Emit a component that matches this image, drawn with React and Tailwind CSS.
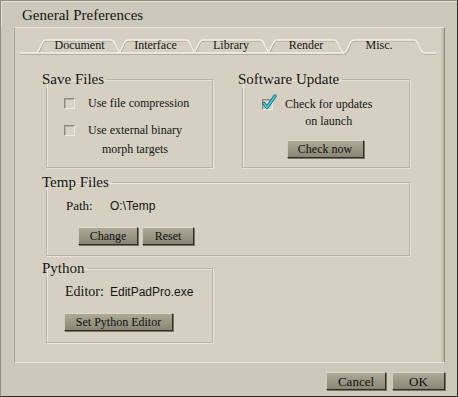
import React from 'react';

const serif = "font-['Liberation_Serif','Times_New_Roman',serif]";
const sans = "font-['Liberation_Sans',Arial,sans-serif]";

const Btn = ({ children, className = '' }) => (
  <button
    className={`h-[18px] ${className} ${serif} text-[12px] leading-none text-[#111] bg-linear-to-b from-[#aeaa99] via-[#9b9785] to-[#8a8675] border border-t-[#dcd8cb] border-l-[#cfcbbd] border-r-[#2f2e29] border-b-[#2f2e29] shadow-[1px_1px_0_#77736a] flex items-center justify-center`}
  >
    {children}
  </button>
);

const Check = ({ checked }) => (
  <span className="relative block w-[11px] h-[11px] shrink-0 border border-t-[#8e8a7c] border-l-[#8e8a7c] border-r-[#eeeadf] border-b-[#eeeadf] bg-[#d8d4c6] shadow-[inset_1px_1px_0_#b6b1a2]">
    {checked && (
      <svg className="absolute -left-[1px] -top-[6px]" width="15" height="16" viewBox="0 0 15 16">
        <path d="M2 9.5 L5 13.5 L13 2" fill="none" stroke="#1b5f6c" strokeWidth="3.2" strokeLinecap="round" strokeLinejoin="round" />
        <path d="M2 9.5 L5 13.5 L13 2" fill="none" stroke="#2fd3ea" strokeWidth="1.8" strokeLinecap="round" strokeLinejoin="round" />
      </svg>
    )}
  </span>
);

const Group = ({ title, className = '', children }) => (
  <fieldset className={`${className} border border-[#b9b4a5] shadow-[inset_1px_1px_0_#e9e5d9,1px_1px_0_#e9e5d9]`}>
    <legend className={`-ml-[5px] pr-[3px] ${serif} text-[15px] leading-[18px] text-[#151515]`}>{title}</legend>
    {children}
  </fieldset>
);

const tabs = [
  { label: 'Document', w: 'w-[89px]' },
  { label: 'Interface', w: 'w-[63px]' },
  { label: 'Library', w: 'w-[88px]' },
  { label: 'Render', w: 'w-[62px]' },
  { label: 'Misc.', w: 'w-[84px]' },
];

const spans = [[20, 107], [102, 182], [177, 256], [251, 330], [328, 410]];
const tabPath = ([a, b]) =>
  `M${a} 25 C${a + 6} 25 ${a + 5} 12 ${a + 11} 12 L${b - 11} 12 C${b - 5} 12 ${b - 6} 25 ${b} 25`;

const TabStrip = () => (
  <div className="relative h-[27px]">
    <svg className="absolute inset-0" width="429" height="27" viewBox="0 0 429 27">
      {spans.map((s, i) => (
        <g key={i}>
          <path d={tabPath(s)} transform="translate(0.8 1)" fill="none" stroke="#a39e8f" strokeWidth="1" />
          <path d={tabPath(s)} fill="none" stroke="#f3f0e7" strokeWidth="1.4" />
        </g>
      ))}
      <path d="M5 26.3 L328 26.3 M410 26.3 L421 26.3" stroke="#aaa596" strokeWidth="1" />
      <path d="M5 25 L328 25 M410 25 L421 25" stroke="#f3f0e7" strokeWidth="1.4" />
    </svg>
    <div className={`relative flex pl-[20px] pt-[10px] ${serif} text-[12px] leading-[14px] text-[#151515]`}>
      {tabs.map((t) => (
        <div key={t.label} className={`${t.w} text-center`}>{t.label}</div>
      ))}
    </div>
  </div>
);

export default function App() {
  return (
    <div className={`w-[458px] h-[397px] flex flex-col bg-[#cdc9ba] border border-t-[#8f8b80] border-l-[#8f8b80] border-r-[#2b2a26] border-b-[#2b2a26] ${serif} text-[#151515]`}>
      <div className="h-[26px] pl-[21px] pt-[5px] text-[15px] leading-[18px] shadow-[inset_1px_1px_0_#e4e0d4]">
        General Preferences
      </div>

      <div className="ml-[13px] w-[431px] h-[336px] bg-[#d5d0c1] border border-t-[#eeeadf] border-l-[#a5a193] border-r-[#8d897c] border-b-[#ebe7dc] shadow-[inset_-3px_0_2px_-1px_#bdb8a9]">
        <TabStrip />

        <div className="pl-[31px] grid grid-cols-[167px_168px] gap-x-[29px]">
          <Group title="Save Files" className="mt-[15px] h-[98px]">
            <div className="pl-[17px] pt-[6px] text-[12px]">
              <div className="flex items-center gap-[13px] leading-[19px]">
                <Check />
                <span>Use file compression</span>
              </div>
              <div className="mt-[8px] flex items-start gap-[13px] leading-[19px]">
                <span className="mt-[4px]"><Check /></span>
                <span className="text-center">Use external binary<br />morph targets</span>
              </div>
            </div>
          </Group>

          <Group title="Software Update" className="mt-[15px] h-[98px]">
            <div className="pl-[19px] pt-[8px] text-[12px]">
              <div className="flex items-start gap-[12px] leading-[17px]">
                <span className="mt-[3px]"><Check checked /></span>
                <span className="text-center">Check for updates<br />on launch</span>
              </div>
            </div>
            <div className="mt-[10px] flex justify-center pr-[2px]">
              <Btn className="w-[77px]">Check now</Btn>
            </div>
          </Group>

          <Group title="Temp Files" className="col-span-2 mt-[5px] h-[83px]">
            <div className="pl-[19px] pt-[6px] flex items-center leading-[18px]">
              <span className="w-[44px] text-[13px]">Path:</span>
              <span className={`${sans} text-[12px]`}>O:\Temp</span>
            </div>
            <div className="mt-[12px] pl-[31px] flex gap-[4px]">
              <Btn className="w-[60px]">Change</Btn>
              <Btn className="w-[52px]">Reset</Btn>
            </div>
          </Group>

          <Group title="Python" className="mt-[3px] h-[84px]">
            <div className="pl-[18px] pt-[6px] flex items-center leading-[18px]">
              <span className="w-[45px] text-[14px]">Editor:</span>
              <span className={`${sans} text-[12px]`}>EditPadPro.exe</span>
            </div>
            <div className="mt-[12px] pl-[17px]">
              <Btn className="w-[109px]">Set Python Editor</Btn>
            </div>
          </Group>
        </div>
      </div>

      <div className="flex justify-end gap-[6px] pt-[9px] pr-[12px]">
        <Btn className="w-[60px] text-[13px]">Cancel</Btn>
        <Btn className="w-[53px] text-[13px]">OK</Btn>
      </div>
    </div>
  );
}
